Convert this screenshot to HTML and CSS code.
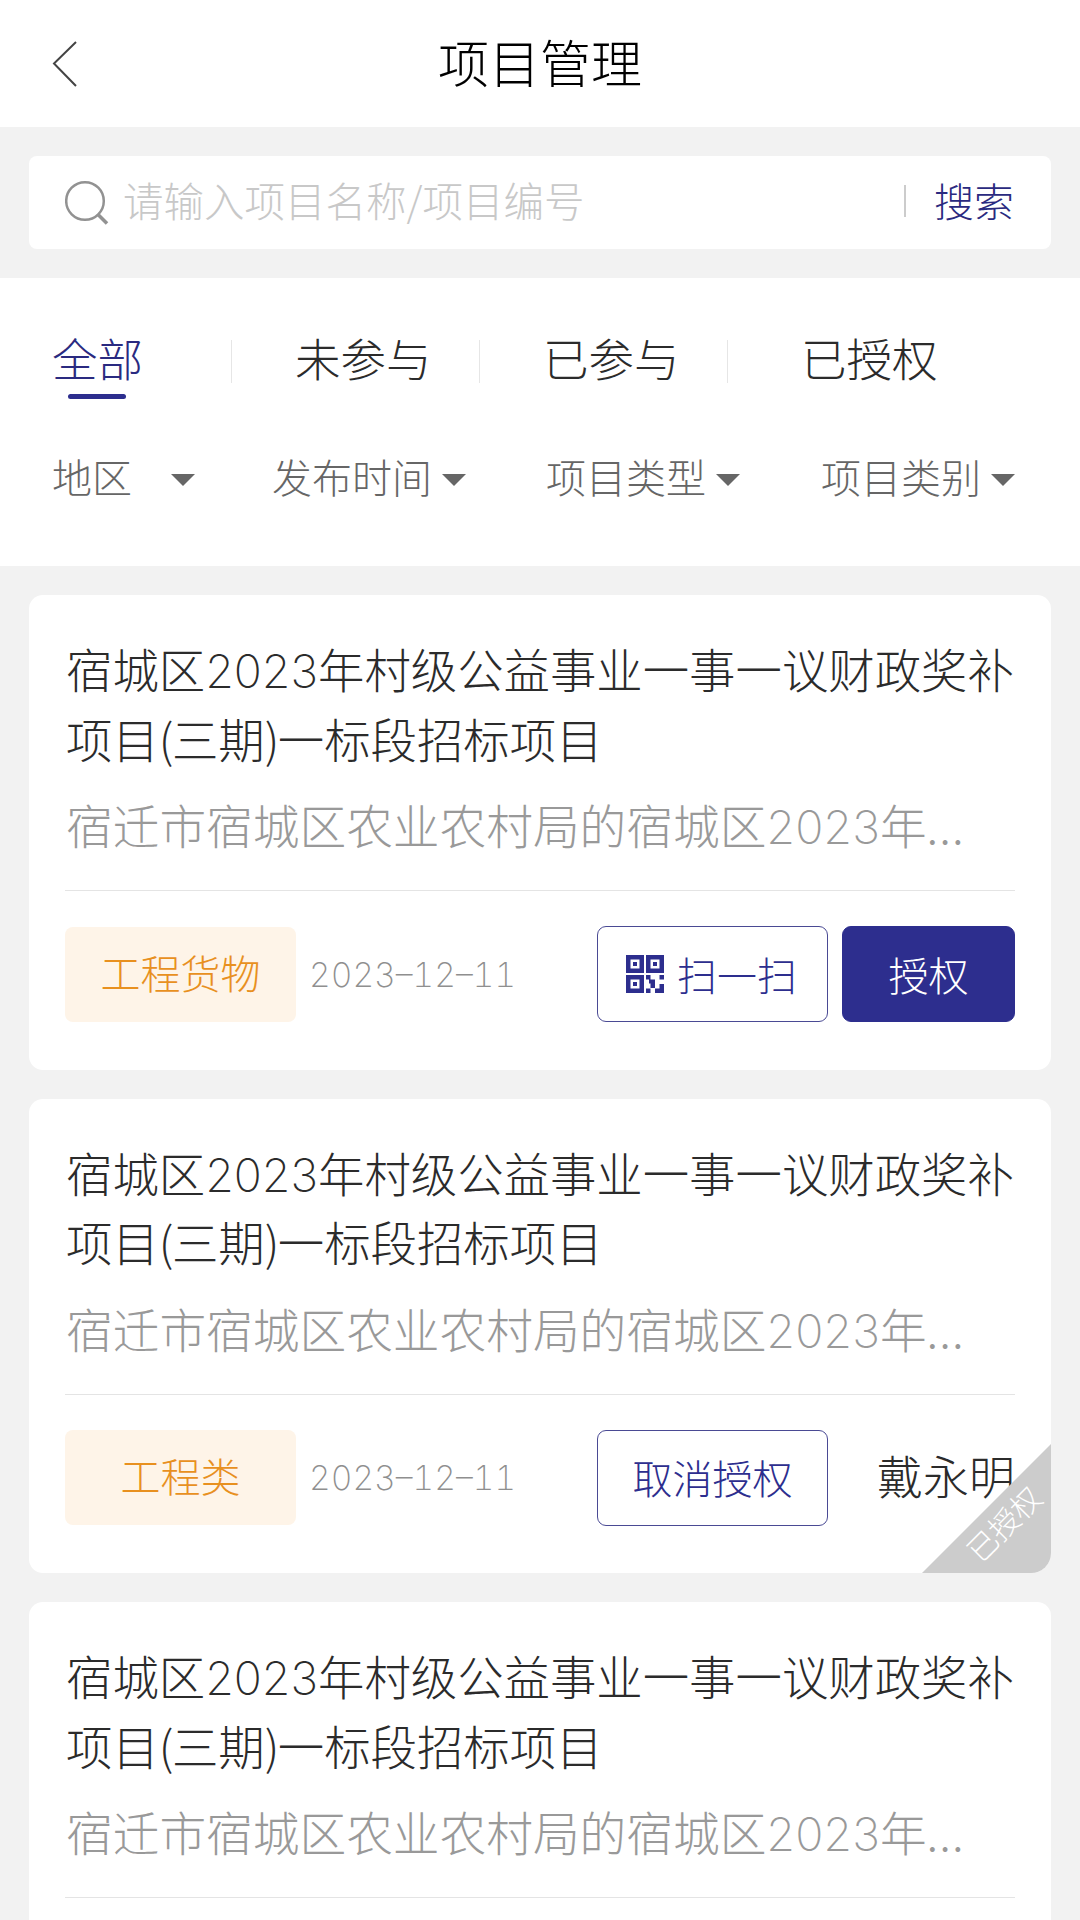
FILE: index.html
```
<!doctype html>
<html lang="zh-CN">
<head>
<meta charset="utf-8">
<meta name="viewport" content="width=device-width,initial-scale=1.0">
<title>项目管理</title>
<link rel="stylesheet" href="styles.css">
</head>
<body>
	<header class="header">
		<svg class="back" width="26" height="46" viewBox="0 0 26 46"><path d="M24 1L2 22.500L24 45" fill="none" stroke="#444" stroke-width="2"/></svg>
		<h1>项目管理</h1>
	</header>

	<div class="search-wrap">
		<div class="search">
			<svg class="search-icon" width="46" height="46" viewBox="0 0 46 46"><circle cx="20" cy="21" r="18.800" fill="none" stroke="#929292" stroke-width="2.500"/><path d="M32.500 34L42 43.500" stroke="#929292" stroke-width="3.500"/></svg>
			<span class="placeholder">请输入项目名称/项目编号</span>
			<span class="search-btn">搜索</span>
		</div>
	</div>

	<section class="panel">
		<nav class="tabs">
			<span class="tab active">全部</span>
			<span class="tab">未参与</span>
			<span class="tab">已参与</span>
			<span class="tab">已授权</span>
		</nav>
		<div class="filters">
			<span class="filter area">地区</span>
			<span class="filter">发布时间</span>
			<span class="filter">项目类型</span>
			<span class="filter">项目类别</span>
		</div>
	</section>

	<main class="list">
		<article class="card">
			<h2>宿城区<span class="num">2023</span>年村级公益事业一事一议财政奖补<br>项目<span class="paren">(</span>三期<span class="paren">)</span>一标段招标项目</h2>
			<p class="desc">宿迁市宿城区农业农村局的宿城区<span class="num">2023</span>年<span class="dots">...</span></p>
			<div class="card-foot">
				<span class="tag">工程货物</span>
				<span class="date">2023–12–11</span>
				<button class="btn">
					<svg class="qr" width="38" height="38" viewBox="0 0 38 38" fill="#2d2e8e">
						<path fill-rule="evenodd" d="M0 0h18v18H0zM4.500 4.500v9h9v-9zM20 0h18v18H20zM24.500 4.500v9h9v-9zM0 20h18v18H0zM4.500 24.500v9h9v-9z"/>
						<path d="M7 7h4v4H7zM27 7h4v4h-4zM7 27h4v4H7zM20 20h4.500v4.500H29V33h-4.500v-4.500H23v-4h-3zM33.500 20H38v4.500h-4.500zM20 33.500h4.500V38H20zM33.500 29H38v9h-9v-4.500h4.500z"/>
					</svg>扫一扫
				</button>
				<button class="btn primary">授权</button>
			</div>
		</article>

		<article class="card">
			<h2>宿城区<span class="num">2023</span>年村级公益事业一事一议财政奖补<br>项目<span class="paren">(</span>三期<span class="paren">)</span>一标段招标项目</h2>
			<p class="desc">宿迁市宿城区农业农村局的宿城区<span class="num">2023</span>年<span class="dots">...</span></p>
			<div class="card-foot">
				<span class="tag">工程类</span>
				<span class="date">2023–12–11</span>
				<button class="btn">取消授权</button>
				<span class="person">戴永明</span>
			</div>
			<div class="corner"><span>已授权</span></div>
		</article>

		<article class="card">
			<h2>宿城区<span class="num">2023</span>年村级公益事业一事一议财政奖补<br>项目<span class="paren">(</span>三期<span class="paren">)</span>一标段招标项目</h2>
			<p class="desc">宿迁市宿城区农业农村局的宿城区<span class="num">2023</span>年<span class="dots">...</span></p>
			<div class="card-foot"></div>
		</article>
	</main>
</body>
</html>
```
FILE: styles.css
```
*{
	box-sizing: border-box;
	margin: 0;
	padding: 0;
}
body{
	width: 1080px;
	height: 1920px;
	overflow: hidden;
	display: flex;
	flex-direction: column;
	background-color: #f2f2f2;
	font-family: "Noto Sans CJK SC", sans-serif;
	font-weight: 300;
	color: #2b2b2b;
	white-space: nowrap;
}
.header{
	flex: none;
	height: 127px;
	background-color: #fff;
	display: grid;
	grid-template-columns: 76px 1fr 76px;
	align-items: center;
}
.back{
	margin-left: 52px;
}
.header h1{
	padding-bottom: 6px;
	font-size: 51px;
	line-height: 76px;
	font-weight: 300;
	color: #000;
	text-align: center;
}
.search-wrap{
	flex: none;
	padding: 29px;
	height: 151px;
}
.search{
	height: 93px;
	padding: 0 37px 0 36px;
	background-color: #fff;
	border-radius: 8px;
	display: flex;
	align-items: center;
	font-size: 40px;
}
.placeholder{
	flex: 1;
	margin-left: 12px;
	padding-bottom: 6px;
	font-size: 40.500px;
	color: #c8c8c8;
}
.search-btn{
	display: flex;
	align-items: center;
	padding-bottom: 6px;
	color: #2a2a80;
}
.search-btn::before{
	content: "";
	width: 2px;
	height: 32px;
	margin: 3px 28px 0 0;
	background-color: #ccc;
}
.panel{
	flex: none;
	height: 288px;
	background-color: #fff;
	padding: 46px 0 0 52px;
}
.tabs{
	display: grid;
	grid-template-columns: 180px 248px 248px 1fr;
	font-size: 45.500px;
	line-height: 66px;
}
.tab{
	display: flex;
	align-items: center;
	padding-left: 63px;
}
.tab.active{
	padding-left: 0;
	position: relative;
	color: #2a2a80;
}
.tab:last-child{
	padding-left: 73px;
}
.tab + .tab::before{
	content: "";
	width: 1px;
	height: 43px;
	margin: 8px 63px 0 -64px;
	background-color: #e6e6e6;
}
.tab:last-child::before{
	margin-left: -74px;
	margin-right: 73px;
}
.tab.active::after{
	content: "";
	position: absolute;
	left: 16px;
	bottom: -9px;
	width: 58px;
	height: 5px;
	border-radius: 3px;
	background-color: #2d2e8e;
}
.filters{
	display: grid;
	grid-template-columns: 220px 274px 275px 1fr;
	margin-top: 56px;
	font-size: 40px;
	line-height: 60px;
	color: #666;
}
.filter{
	display: flex;
	align-items: center;
}
.filter::after{
	content: "";
	margin: 7px 0 0 10px;
	border: 12px solid transparent;
	border-top-color: #666;
	border-bottom: 0;
}
.filter.area::after{
	margin-left: 39px;
}
.list{
	flex: 1;
	min-height: 0;
	overflow: hidden;
	padding: 29px 29px 0;
	display: flex;
	flex-direction: column;
	gap: 29px;
}
.card{
	position: relative;
	flex: none;
	height: 474.500px;
	padding: 38px 36px 0;
	background-color: #fff;
	border-radius: 14px;
}
.card h2{
	padding-left: 1px;
	font-size: 46.400px;
	line-height: 69.500px;
	font-weight: 300;
}
.num{
	font-family: Inter, "Noto Sans CJK SC", sans-serif;
	font-weight: 200;
	line-height: 0;
}
.paren{
	letter-spacing: -1.500px;
}
.desc{
	margin-top: 17px;
	padding-left: 1px;
	font-size: 46.700px;
	line-height: 69px;
	color: #999;
}
.dots{
	letter-spacing: 1px;
}
.card-foot{
	display: flex;
	align-items: center;
	margin-top: 32px;
	padding-top: 35px;
	border-top: 1px solid #e4e4e4;
}
.tag{
	width: 231px;
	height: 95px;
	border-radius: 8px;
	background-color: #fef4e8;
	color: #e8901f;
	font-size: 40px;
	line-height: 91px;
	text-align: center;
}
.date{
	flex: 1;
	margin-left: 13px;
	font-family: Inter, "Noto Sans CJK SC", sans-serif;
	font-variant-numeric: tabular-nums;
	font-weight: 200;
	font-size: 33.600px;
	color: #8f8f8f;
}
.btn{
	display: flex;
	align-items: center;
	justify-content: center;
	width: 231px;
	height: 96px;
	padding-bottom: 1px;
	border: 1px solid #4a4a94;
	border-radius: 9px;
	background-color: #fff;
	font: inherit;
	font-size: 40px;
	color: #2d2e8e;
}
.btn.primary{
	width: 173px;
	margin-left: 14px;
	border-color: #2d2e8e;
	background-color: #2d2e8e;
	color: #fff;
}
.qr{
	margin: 0 13px 0 -2px;
}
.person{
	width: 187px;
	padding-bottom: 7px;
	font-size: 46px;
	text-align: right;
}
.corner{
	position: absolute;
	right: 0;
	bottom: 0;
	width: 129px;
	height: 129px;
	border-bottom-right-radius: 20px;
	background-color: #ccc;
	clip-path: polygon(100% 0, 100% 100%, 0 100%);
}
.card:has(.corner){
	border-bottom-right-radius: 20px;
}
.corner span{
	position: absolute;
	left: 36px;
	top: 54px;
	font-size: 30px;
	line-height: 50px;
	color: #fff;
	transform: rotate(-45deg);
}
```
